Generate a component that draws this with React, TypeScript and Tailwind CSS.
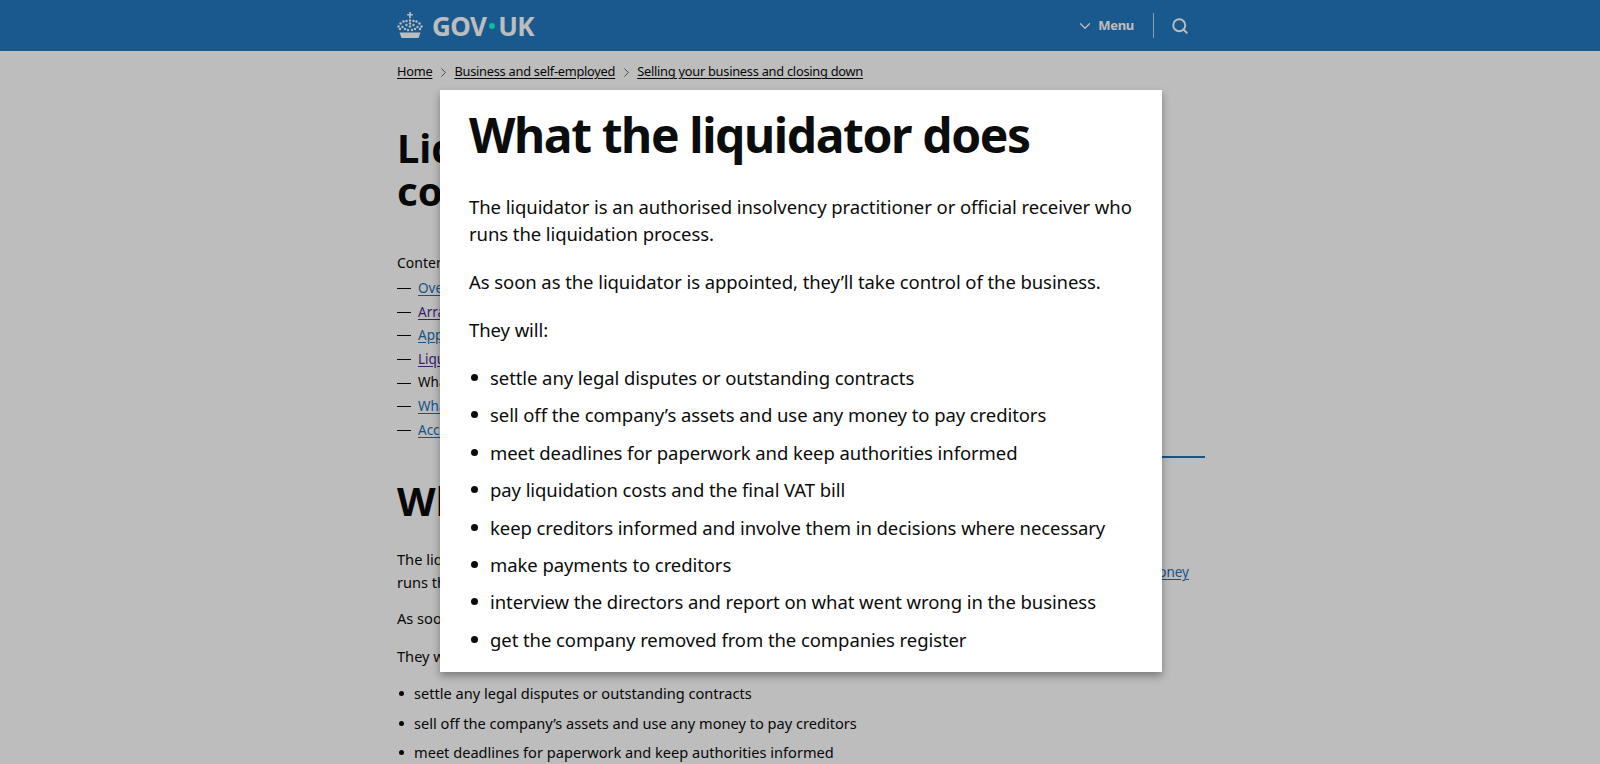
import { ChevronDown, ChevronRight, Search } from 'lucide-react';

const font = { fontFamily: '"Noto Sans", "Liberation Sans", sans-serif' };

const contents = [
  { label: 'Overview', color: 'text-[#1d70b8]', link: true },
  { label: 'Arranging liquidation', color: 'text-[#4c2c92]', link: true },
  { label: 'Appointing a liquidator', color: 'text-[#1d70b8]', link: true },
  { label: 'Liquidating your company', color: 'text-[#4c2c92]', link: true },
  { label: 'What the liquidator does', color: 'text-[#0b0c0c]', link: false },
  { label: 'What happens to directors', color: 'text-[#1d70b8]', link: true },
  { label: 'Access to records', color: 'text-[#1d70b8]', link: true },
];

const duties = [
  'settle any legal disputes or outstanding contracts',
  'sell off the company’s assets and use any money to pay creditors',
  'meet deadlines for paperwork and keep authorities informed',
  'pay liquidation costs and the final VAT bill',
  'keep creditors informed and involve them in decisions where necessary',
  'make payments to creditors',
  'interview the directors and report on what went wrong in the business',
  'get the company removed from the companies register',
];

function Crown() {
  const dots = [
    [13, 8.5], [13, 11.5], [13, 14.5],
    [9.5, 9], [6.5, 9.5], [3.5, 11.5], [1.5, 14.5], [3, 17], [5.5, 15],
    [16.5, 9], [19.5, 9.5], [22.5, 11.5], [24.5, 14.5], [23, 17], [20.5, 15],
    [9.5, 13], [16.5, 13], [8, 17], [11, 18], [15, 18], [18, 17],
  ];
  return (
    <svg width="26" height="27" viewBox="0 0 26 27" fill="#fff" className="mr-[9px]">
      {dots.map(([x, y]) => (
        <circle key={`${x}-${y}`} cx={x} cy={y} r="1.2" />
      ))}
      <path d="M12.2 0h1.6v2h2v1.6h-2v2.6h-1.6V3.6h-2V2h2z" />
      <path d="M2.5 20.5h21l-2 5.5h-17z" />
    </svg>
  );
}

function Header() {
  return (
    <header className="h-[51px] bg-[#2478bf]">
      <div className="ml-[397px] flex h-full w-[792px] items-center">
        <Crown />
        <span className="flex items-center text-[26px] font-bold leading-none tracking-[-0.6px] text-white" style={font}>
          GOV
          <span className="mx-[3px] size-[6px] rounded-full bg-[#00ffe0]" />
          UK
        </span>
        <div className="ml-auto flex items-center text-white">
          <ChevronDown size={18} strokeWidth={1.75} className="mr-[4px]" />
          <span className="text-[13px] font-bold tracking-[-0.3px]" style={font}>Menu</span>
          <div className="ml-[19px] mr-[17px] h-[25px] w-px bg-white/70" />
          <Search size={18} strokeWidth={2.5} />
        </div>
      </div>
    </header>
  );
}

function Breadcrumbs() {
  const items = ['Home', 'Business and self-employed', 'Selling your business and closing down'];
  return (
    <nav className="flex h-[42px] items-center text-[12.8px] tracking-[-0.25px] text-[#0b0c0c]">
      {items.map((item, i) => (
        <span key={item} className="flex items-center">
          {i > 0 && <ChevronRight size={15} strokeWidth={1.5} className="mx-[3.5px] text-[#505a5f]" />}
          <span className="underline underline-offset-2">{item}</span>
        </span>
      ))}
    </nav>
  );
}

function Page() {
  return (
    <main className="ml-[397px] w-[808px] text-[#0b0c0c]" style={font}>
      <Breadcrumbs />
      <h1 className="mt-[33px] w-[500px] text-[40px] font-bold leading-[43px]">Liquidate your limited company</h1>
      <p className="mt-[41px] text-sm leading-5">Contents</p>
      <ul className="mt-[4px] text-[13.5px] leading-[23.6px]">
        {contents.map((c) => (
          <li key={c.label} className="flex items-center">
            <span className="mr-[7px] h-px w-[14px] bg-[#0b0c0c]" />
            <span className={`${c.color} ${c.link ? 'underline underline-offset-2' : ''}`}>{c.label}</span>
          </li>
        ))}
      </ul>
      <div className="flex">
        <div className="w-[560px]">
          <h2 className="mt-[37px] text-[40px] font-bold leading-[44px]">What the liquidator does</h2>
          <p className="mt-[25px] w-[545px] text-[14.6px] leading-[23px]">
            The liquidator is an authorised insolvency practitioner or official receiver who runs the liquidation process.
          </p>
          <p className="mt-[13px] text-[14.6px] leading-[23px]">As soon as the liquidator is appointed, they’ll take control of the business.</p>
          <p className="mt-[15px] text-[14.6px] leading-[23px]">They will:</p>
          <ul className="mt-[14px] text-[14.6px] leading-[23px]">
            {duties.slice(0, 3).map((d) => (
              <li key={d} className="mb-[6.5px] flex items-center">
                <span className="mr-[10px] ml-[2px] size-[5px] rounded-full bg-[#0b0c0c]" />
                {d}
              </li>
            ))}
          </ul>
        </div>
        <aside className="ml-[30px] mt-[14px] flex-1 self-start">
          <div className="h-[2px] bg-[#1d70b8]" />
          <p className="mt-[104px] pr-[16px] text-right text-[13.5px] leading-5 text-[#1d70b8] underline underline-offset-2">Get help with money</p>
        </aside>
      </div>
    </main>
  );
}

function Modal() {
  return (
    <div className="absolute inset-0 flex items-start justify-center bg-black/[.26] pl-[2px] pt-[90px]" style={font}>
      <div className="h-[582px] w-[722px] bg-white pl-[29px] pr-[20px] text-[#0b0c0c] shadow-[0_4px_8px_rgba(0,0,0,0.35)]">
        <h2 className="pt-[13px] text-[48px] font-bold leading-[64px] tracking-[-1.4px]">What the liquidator does</h2>
        <p className="mt-[26px] text-[18.5px] leading-[27px] tracking-[-0.08px]">
          The liquidator is an authorised insolvency practitioner or official receiver who runs the liquidation process.
        </p>
        <p className="mt-[21px] text-[18.5px] leading-[27px] tracking-[-0.08px]">As soon as the liquidator is appointed, they’ll take control of the business.</p>
        <p className="mt-[21px] text-[18.5px] leading-[27px] tracking-[-0.08px]">They will:</p>
        <ul className="mt-[21px] space-y-[10.4px] text-[18.5px] leading-[27px] tracking-[-0.08px]">
          {duties.map((d) => (
            <li key={d} className="flex items-center">
              <span className="ml-[2px] mr-[12px] size-[7px] shrink-0 rounded-full bg-[#0b0c0c]" />
              {d}
            </li>
          ))}
        </ul>
      </div>
    </div>
  );
}

export default function App() {
  return (
    <div className="relative h-[764px] overflow-hidden bg-white">
      <Header />
      <Page />
      <Modal />
    </div>
  );
}
